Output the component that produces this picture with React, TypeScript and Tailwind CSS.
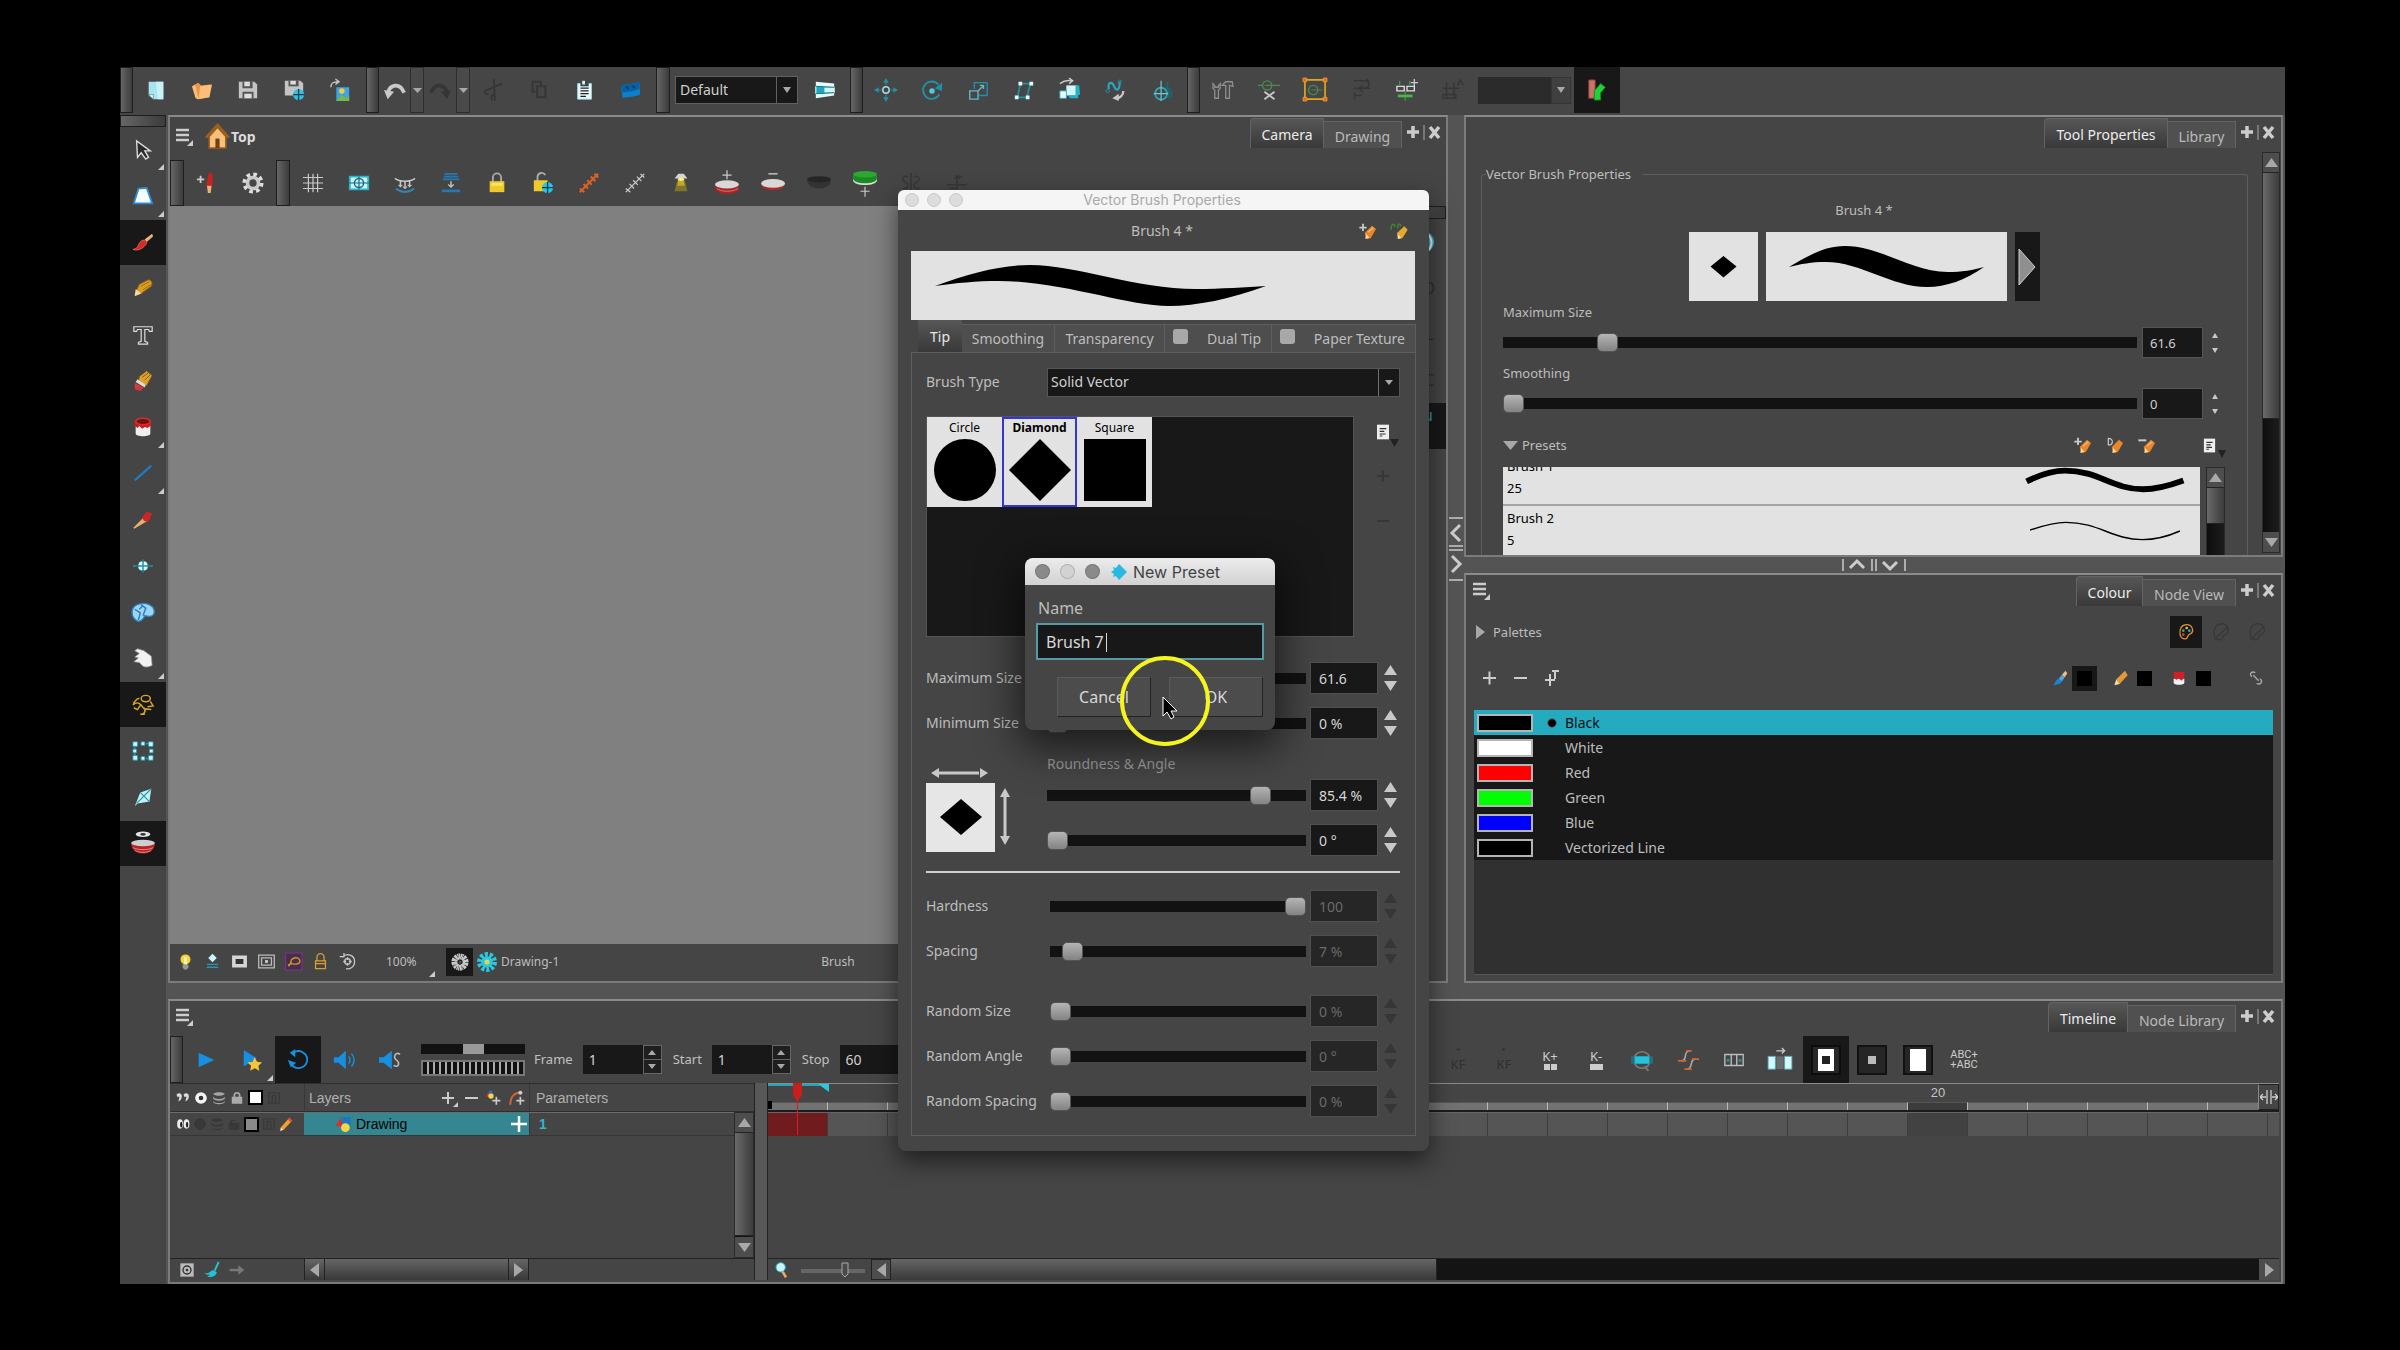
import type { ReactNode } from 'react'

const G = '#c9c9c9'
const TEAL = '#1f93a6'
const DIM = '#363636'

// 24x24 drawings, keyed by tool
const ICONS: Record<string, ReactNode> = {
  newDoc: <><path d="M4 3h16v19H9l-5-4z" fill="#a9e4ee" /><path d="M4 17l5 5v-5z" fill="#e9fbff" stroke="#4a7a84" strokeWidth=".7" /><path d="M12 3h8v19h-6z" fill="#c9f2f8" /></>,
  open: <><path d="M2 7l6-3 3 3 10-1-1 14-13 2z" fill="#e8964a" /><path d="M1 8l4-1 3 15-3-1zM10 8l13-2-3 14-12 2z" fill="#fbbd77" /></>,
  save: <><path d="M2 3h17l3 3v15H2z" fill="#c4c4c4" /><path d="M6 3h11v7H6zM6 14h12v7H6z" fill="#555" /><path d="M8 3h6v5H8zM8 16h8v5H8z" fill="#ddd" /></>,
  saveAs: <><path d="M2 2h17l3 3v13H2z" fill="#c4c4c4" /><path d="M6 2h11v6H6z" fill="#555" /><path d="M8 2h6v4H8z" fill="#ddd" /><circle cx="17" cy="17" r="6" fill="#29c4e0" /><path d="M17 11v12M11 17h12" stroke="#083a52" strokeWidth="1.4" /></>,
  importImg: <><path d="M2 9c0-5 3-6 8-6M7 0l4 3-4 3" fill="none" stroke={G} strokeWidth="1.5" /><path d="M8 9h14v15H8z" fill="#3aa5e8" /><circle cx="14" cy="13" r="3" fill="#f6c944" /><path d="M8 24l6-7 4 4 4-3v6z" fill="#7ab648" /></>,
  undo: <><path d="M4 16C6 6 17 3 22 15" fill="none" stroke={G} strokeWidth="4" /><path d="M0 12l11 2-7 8z" fill={G} /></>,
  redo: <><path d="M2 15C7 3 18 6 20 16" fill="none" stroke={DIM} strokeWidth="4" /><path d="M24 12l-11 2 7 8z" fill={DIM} /></>,
  cut: <path d="M13 0l1 24M3 13l19-8M4 13a2 2 0 103 3M13 17a2 3 0 10-1 6" fill="none" stroke={DIM} strokeWidth="2" />,
  copy: <path d="M8 14H5V3h9v4M10 8h9v12h-9z" fill="none" stroke={DIM} strokeWidth="2.200" />,
  paste: <><path d="M4 5h15v17H4z" fill="#eefafc" stroke="#9adbe6" /><path d="M7 4h9v4H7z" fill="#2c4a50" /><path d="M9 2h3v4H9z" fill="#eee" /><path d="M7 10h9M7 13h9M7 16h9M7 19h6" stroke="#222" strokeWidth="1.400" /></>,
  clapper: <><path d="M1 7c7-2 13-1 20-4l1 14c-6 3-12 2-19 4z" fill="#0b80cc" /><path d="M1 7c7-2 13-1 20-4v8c-6 3-12 2-18 4z" fill="#0a5fa0" /><path d="M7 8l2 3M14 7l2 3" stroke="#063f70" strokeWidth="2" /></>,
  sheet: <><path d="M2 3l20 2v13L2 21z" fill="#e3fbfe" /><path d="M2 8l20 1v6L2 16z" fill="#19a9c0" /><path d="M2 8v8M22 9v6M12 10h9v4h-9z" stroke="#e3fbfe" strokeWidth="1.200" fill="#d0f5fa" /><path d="M2 8l20 1M2 16l20-1" stroke="#176c7c" /></>,
  move: <g stroke={TEAL} fill="none" strokeWidth="1.300"><circle cx="12" cy="12" r="3.500" stroke="#a9d8e0" strokeWidth="1.600" /><path d="M12 7V1M12 23v-6M1 12h6M23 12h-6" /><path d="M9 4l3-5 3 5zM9 20l3 5 3-5zM4 9l-5 3 5 3zM20 9l5 3-5 3z" fill={TEAL} stroke="none" /></g>,
  rotate: <><path d="M19 6a9.500 9.500 0 101 11" fill="none" stroke={TEAL} strokeWidth="2" /><path d="M23 4v9l-8-3z" fill={TEAL} /><circle cx="12" cy="13" r="3" fill="#4cc9e4" /></>,
  scale: <g fill="none" stroke={TEAL} strokeWidth="1.500"><path d="M8 11V4h14v14H13" /><path d="M3 13h9v9H3z" stroke="#63b8c6" /><path d="M12 13l6-6M14 7h4v4" stroke="#63b8c6" /></g>,
  skew: <><path d="M8 5h11l-4 15H5z" fill="none" stroke={TEAL} strokeWidth="1.800" /><path d="M6 3h4v4H6zM18 3h4v4h-4zM2 18h4v4H2zM14 18h4v4h-4z" fill="#e3fbff" /></>,
  maintain: <><path d="M8 7h12v11H8z" fill="#d3f8fc" /><path d="M18 7h4l1 10-5 2zM10 18h11v3h-9z" fill="#23b3c9" /><path d="M1 13h7v8H1z" fill="#f0feff" stroke="#23b3c9" /><path d="M1 5c4-3 8-4 13-3M11-1l4 3-4 3" stroke={G} fill="none" strokeWidth="1.500" /></>,
  spline: <><path d="M4 11C3 2 8 3 10 8s6 6 6-5" fill="none" stroke="#2ba6bb" strokeWidth="2.400" /><path d="M20 13c0 5-4 8-8 8" fill="none" stroke={G} strokeWidth="2.500" /><path d="M8 21l7-5v8z" fill={G} /><circle cx="16" cy="3" r="1.800" fill="none" stroke={TEAL} /><circle cx="3" cy="13" r="1.800" fill="none" stroke={TEAL} /></>,
  pivot: <><circle cx="11" cy="16" r="6.500" fill="none" stroke="#2ba6bb" strokeWidth="2" /><path d="M11 2v22M3 16h17" stroke="#74c6d4" strokeWidth="1.300" /><path d="M18 3v6c5 3 6 8 2 12M16 9c4 3 4 8 2 12" stroke="#176c7a" strokeWidth="1.500" fill="none" /></>,
  rigTools: <g fill="none" stroke="#8f8f8f" strokeWidth="1.400"><path d="M1 5v5l2 2v9h4v-9l2-2V5L7 7v2H3V7zM11 7l4-4h7l1 5-4-1v14h-4V7z" /></g>,
  cutCable: <><circle cx="10" cy="7" r="5" fill="none" stroke="#4c8a4f" strokeWidth="1.500" /><path d="M0 7h5M8 7h16" stroke="#4c8a4f" strokeWidth="1.300" /><path d="M7 14l11 8M18 14L7 22" stroke={G} strokeWidth="2" /></>,
  bounds: <><path d="M1 1h22v21H1z" fill="none" stroke="#e0a91b" strokeWidth="1.800" /><circle cx="10" cy="12" r="5" fill="none" stroke="#4c8a4f" strokeWidth="1.500" /><path d="M8 12h12" stroke="#4c8a4f" /><path d="M-1-1h4v4h-4zM21-1h4v4h-4zM-1 20h4v4h-4zM21 20h4v4h-4z" fill="#e5622a" stroke="#f09a2c" /></>,
  reorder: <path d="M4 2h14c4 2 4 8-4 8H4M18 0l3 3M14 10h8M14 7l-4 3 4 4M5 14v8M5 18h8" fill="none" stroke={DIM} strokeWidth="1.600" />,
  addPeg: <><path d="M1 8h8v5H1zM12 8h8v5h-8z" fill="none" stroke="#ddd" strokeWidth="1.500" /><path d="M20 0v8M16 4h8" stroke={G} strokeWidth="1.500" /><path d="M4 2v6M15 2v6M10 13v4M10 20v4" stroke="#4c8a4f" strokeWidth="1.500" /><path d="M2 17h16v3H2z" fill="#46b94a" /></>,
  addPegOff: <path d="M1 10h18M1 17h14v4H1zM5 4v16M13 4v16M17 7l3-6 3 6" fill="none" stroke={DIM} strokeWidth="1.600" />,
  deform: <><path d="M3 1h7v20H3z" fill="#c87468" stroke="#8d3b33" /><path d="M9 23V13l7-8 5 4-5 6v8z" fill="#22d13a" stroke="#0a8a1d" /></>,
  brushPlus: <><path d="M1 8h8M5 4v8" stroke={G} strokeWidth="2" /><path d="M14 1l4 1v13h-7z" fill="#cc2020" /><path d="M12 15h5l-1 8h-3z" fill="#e9b474" /></>,
  gear: <><circle cx="12" cy="12" r="6" fill="none" stroke={G} strokeWidth="4" /><circle cx="12" cy="12" r="9.500" fill="none" stroke="#ddd" strokeWidth="4" strokeDasharray="4 3.460" /></>,
  grid: <path d="M7 2v20M12 2v20M17 2v20M1 6h22M1 12h22M1 18h22" stroke={G} strokeWidth="1.300" />,
  safe: <><path d="M2 5h20v14H2z" fill="#c9f4fa" stroke="#2bb5c9" strokeWidth="2" /><circle cx="12" cy="12" r="5" fill="none" stroke="#196d82" strokeWidth="1.600" /><path d="M0 12h24M12 5v14" stroke="#196d82" strokeWidth="1.300" /></>,
  outline: <g fill="none" strokeWidth="1.600"><path d="M1 7c5 4 17 4 22 0M7 10v5M12 11v6M17 10v5" stroke={G} /><path d="M5 14l2 2 2-2M10 16l2 2 2-2M15 14l2 2 2-2" stroke={G} strokeWidth="1.200" /><path d="M2 18c6 5 14 5 20 0" stroke="#2d88b8" strokeWidth="2" /></g>,
  flatten: <><path d="M5 1h14v2H5zM4 4h16v2H4zM3 7h18v2H3zM2 19h20v3H2z" fill="#2578b4" /><path d="M12 10v7M9 13.500l3 3 3-3" fill="none" stroke={G} strokeWidth="1.500" /></>,
  lock: <><path d="M7.500 11V6a4.500 4.500 0 019 0v5" fill="none" stroke="#aaa" strokeWidth="2" /><path d="M4 10h16v12H4z" fill="#edc92c" /><path d="M6 12h12v3H6z" fill="#fbe36a" /></>,
  unlock: <><path d="M6 10V5a4.500 4.500 0 018.500-1.500" fill="none" stroke="#aaa" strokeWidth="2" /><path d="M2 9h15v12H2z" fill="#edc92c" /><circle cx="17" cy="17" r="6" fill="#29c4e0" /><path d="M17 11v12M11 17h12" stroke="#083a52" strokeWidth="1.400" /></>,
  orangeTicks: <path d="M2 22L22 2M2 18l5 4M6 13l5 5M10 9l5 5M14 5l5 5M18 2l4 4" stroke="#d8622a" strokeWidth="2.200" />,
  greyTicks: <path d="M2 22L22 2M2 18l5 4M6 13l5 5M10 9l5 5M14 5l5 5M18 2l4 4" stroke={G} strokeWidth="1.400" />,
  lamp: <><path d="M8 9h8l3 12H5z" fill="#80742c" /><path d="M9 9h6l1 6H8z" fill="#c0a828" /><path d="M9 2h6l4 5H5z" fill="#d5d5d5" /><ellipse cx="12" cy="8" rx="3.500" ry="1.800" fill="#fff27a" /></>,
  drumPlus: <><path d="M12-2v10M7 3.500h10" stroke={G} strokeWidth="1.400" /><path d="M-1 14v4c0 8 26 8 26 0v-4z" fill="#a52626" /><path d="M1 18c5 4 17 4 23 0" stroke="#d77" fill="none" /><ellipse cx="12" cy="13.500" rx="13" ry="4.500" fill="#d8d8d8" /></>,
  drumMinus: <><path d="M7 2h10" stroke={G} strokeWidth="1.500" /><path d="M-1 13c0 9 26 9 26 0z" fill="#b02a2a" /><ellipse cx="12" cy="12.500" rx="13" ry="4.800" fill="#d8d8d8" /></>,
  drumOff: <><path d="M-1 9c0 12 26 12 26 0z" fill="#333" /><ellipse cx="12" cy="8" rx="13" ry="3.500" fill="#252525" /></>,
  drumGreen: <><path d="M-1 4v5c0 7 26 7 26 0V4z" fill="#ddd" /><path d="M-1 3v4c0 7 26 7 26 0V3z" fill="#1b8a25" /><ellipse cx="12" cy="2.500" rx="13" ry="3.500" fill="#2aa832" /><path d="M12 16v11M7 21h10" stroke={G} strokeWidth="1.300" /></>,
  mirror: <path d="M12 1v22M9 5c-6-2-8 4-3 6 5 3 2 8-3 7M15 5c6-2 8 4 3 6-5 3-2 8 3 7" fill="none" stroke={DIM} strokeWidth="1.600" />,
  curveOff: <path d="M1 14h22M4 18h8V5h6M9 8l3-4 3 4" fill="none" stroke={DIM} strokeWidth="1.600" />,
  cursor: <path d="M5 2l1 18 4-5 5 7 3-2-4-7h6z" fill="#2a2a2a" stroke="#ddd" strokeWidth="1.500" />,
  cutter: <path d="M7 4l9-1 6 17H2z" fill="#f4fcff" stroke="#2d8bd0" strokeWidth="2" />,
  brush: <><path d="M14 9l8-6 1 3-7 6z" fill="#e8b577" /><path d="M1 20c6 0 5-6 9-9 4-3 8 1 5 4-4 5-9 7-14 5z" fill="#d32a2a" stroke="#ef6b5c" strokeWidth=".8" /></>,
  pencil: <><path d="M8 8l10-5c3 0 5 4 3 7l-11 8-7 1z" fill="#dc9c20" stroke="#8e6413" /><path d="M4 13l6 5-7 3z" fill="#f6d9aa" /><path d="M10 10l9-5M12 14l9-6" stroke="#8e6413" strokeWidth=".9" /></>,
  text: <path d="M2 3h20v5h-3l-1-2h-4v13l3 1v2H7v-2l3-1V6H6L5 8H2z" fill="#454545" stroke="#ddd" strokeWidth="1.300" />,
  eraser: <><path d="M8 7l8-6 6 5-6 11-9-4z" fill="#dca126" stroke="#7d5a15" /><path d="M11 8l7-5M14 11l6-6" stroke="#7d5a15" /><path d="M3 14l10 5-4 4-6-2z" fill="#d23a3a" /><path d="M6 10l9 6-1 3-10-6z" fill="#ddd" /></>,
  paint: <><path d="M4 7v12c0 4 16 4 16 0V7z" fill="#efefef" /><path d="M3 6v5l3 2 2-2 3 3 3-2 3 1 4-3V6z" fill="#c81e1e" /><ellipse cx="12" cy="6" rx="8" ry="3.500" fill="#6e1111" stroke="#d82c2c" strokeWidth="1.800" /></>,
  line: <path d="M3 20L21 4" stroke="#1d7cc4" strokeWidth="2.400" />,
  ink: <><path d="M2 21l12-12 3 3z" fill="#e9b070" stroke="#e9b070" strokeWidth="1.500" /><path d="M11 9l5-6 6 2-4 9-5-1z" fill="#cd2424" /></>,
  centre: <><circle cx="12" cy="12" r="5.500" fill="#d9f8fc" /><path d="M1 12h22M12 5v14" stroke={TEAL} strokeWidth="1.600" /><path d="M4 12l3-2v4zM20 12l-3-2v4zM12 4l2 3h-4zM12 20l2-3h-4z" fill="#1c7586" /></>,
  morph: <><path d="M0 12C0 3 15-1 23 7c3 6 1 12-9 9-2 5-6 7-8 6-4-2-6-5-6-10z" fill="#9fd4f2" stroke="#2a80c0" strokeWidth="1.500" /><path d="M3 9l6 4-2 8M10 4l5 4-3 8M8 9l4-4" fill="none" stroke="#2a80c0" strokeWidth="1.600" /></>,
  hand: <path d="M3 4l5 3-5 4 4 1-5 4 6 1 4 4c4 2 8 0 10-1l-1-10-8-6-7-2z" fill="#f2f2f2" stroke="#999" strokeWidth=".8" />,
  run: <g fill="none" stroke="#d9a526" strokeWidth="1.600"><ellipse cx="15" cy="5" rx="5" ry="3.500" /><path d="M1 12c4-4 7-2 9 0l3 4 8 1M10 11l-4 6-4-2M13 15c3 4 0 7-3 7M8 5C4 4 4 9 1 10M20 8l3 5-6 1M9 22h5" /></g>,
  select: <><path d="M3 4h18v16H3z" fill="none" stroke="#1f93a8" strokeWidth="2" strokeDasharray="4 2" /><path d="M1 2h5v5H1zM10 2h4v4h-4zM18 2h5v5h-5zM1 17h5v5H1zM10 18h4v4h-4zM18 17h5v5h-5zM1 10h4v4H1zM19 10h4v4h-4z" fill="#c8f6fb" stroke="#1f93a8" strokeWidth=".8" /></>,
  kite: <><path d="M9 7l12-4-2 14-13 2-3 3z" fill="#bff3f8" /><path d="M9 7l10 10M21 3L5 19" stroke="#2b98ac" strokeWidth="1.300" /></>,
  onion: <><ellipse cx="12" cy="2.500" rx="8" ry="3" fill="#e3e3e3" /><ellipse cx="12" cy="2.500" rx="3" ry="1.500" fill="#333" /><path d="M-1 13c1 14 25 14 26 0z" fill="#b62525" /><ellipse cx="12" cy="12" rx="13" ry="3.500" fill="#cfcfcf" /><path d="M1 17c5 3 17 3 22 0M3 20c5 3 13 3 18 0" stroke="#ee8a8a" fill="none" /></>,
  home: <><path d="M4 12v11h16V12l-8-9z" fill="#f8c07a" stroke="#9c5f1e" strokeWidth="1.500" /><path d="M1 13L12 1l11 12" fill="none" stroke="#9c5f1e" strokeWidth="2.500" /><path d="M10 14h4v9h-4z" fill="#704012" /></>,
  bulb: <><circle cx="12" cy="9" r="7" fill="#f9d33c" /><path d="M10 6h4v11h-4z" fill="#fff6b5" /><path d="M8 16h8v5l-4 3-4-3z" fill="#999" /></>,
  lightTable: <><path d="M12 1l6 6-6 6-6-6z" fill="#c9f5fc" /><path d="M4 16h16M4 20h16" stroke="#2a95ae" strokeWidth="2" /></>,
  mask: <path d="M4 6h16v12H4z" fill="#333" stroke="#d5d5d5" strokeWidth="5" />,
  maskLine: <><path d="M1 3h22v18H1zM5 7h14v10H5z" fill="none" stroke="#bbb" strokeWidth="1.800" /><path d="M10 10h4v4h-4z" fill="#ccc" /></>,
  lasso: <><path d="M1 0h23v24H1z" fill="#43304a" stroke="#8b2d93" strokeWidth="1.500" /><path d="M4 17l5-2c-4-8 11-12 12-4 0 6-7 5-12 4M5 19l3-5" fill="none" stroke="#d8902f" strokeWidth="2" /></>,
  lockOutline: <path d="M7 11V6a5 5 0 0110 0v5M5 11h14v11H5zM5 15h14" fill="none" stroke="#d9a12c" strokeWidth="1.800" />,
  reset: <g fill="none" stroke={G} strokeWidth="1.800"><path d="M5 6c6-7 17-3 17 6s-8 11-12 10M1 5h6V0" /><circle cx="12" cy="12" r="4" /><path d="M12 6v4M12 14v4M6 12h4M14 12h4" /></g>,
  flower: <><circle cx="12" cy="12" r="7.500" fill="none" stroke={G} strokeWidth="8" strokeDasharray="4.300 .4" /><circle cx="12" cy="12" r="9.500" fill="none" stroke="#181818" strokeWidth="5" strokeDasharray=".8 4.170" /><circle cx="12" cy="12" r="2" fill="#555" /></>,
  flowerTeal: <><circle cx="12" cy="12" r="7" fill="#2cc8e2" /><circle cx="12" cy="12" r="9" fill="none" stroke="#2cc8e2" strokeWidth="6" strokeDasharray="3.600 2.055" /><circle cx="12" cy="12" r="3" fill="#e8d44c" /></>,
  play: <path d="M4 4l17 8-17 8z" fill="#1690e0" />,
  playStar: <><path d="M3 1l14 9-14 9z" fill="#1690e0" /><path d="M15 9l2.500 5 5.500.6-4 3.700 1 5.500-5-2.800-5 2.800 1-5.500-4-3.700 5.500-.6z" fill="#f5c63c" /></>,
  loop: <><path d="M7 4c8-5 16 2 15 9-2 9-13 10-17 4" fill="none" stroke="#1690e0" strokeWidth="2" /><path d="M1 12l3 8 6-5zM9 0L3 4l6 5z" fill="#1690e0" /></>,
  sound: <><path d="M1 9h5l8-7v20l-8-7H1z" fill="#1690e0" /><path d="M17 8c2 2 2 6 0 8M20 5c4 4 4 10 0 14" fill="none" stroke="#1690e0" strokeWidth="1.600" /></>,
  scrub: <><path d="M0 9h5l9-7v20l-9-7H0z" fill="#1690e0" /><path d="M23 6c-5-4-8 3-4 6s3 9-3 6" fill="none" stroke="#bbb" strokeWidth="1.700" /></>,
  prevKey: <path d="M16 0v8L7 4z" fill="#303030" />,
  nextKey: <path d="M8 0v8l9-4z" fill="#303030" />,
  zoomKey: <><circle cx="12" cy="12" r="9" fill="none" stroke="#7b7b7b" strokeWidth="1.800" /><path d="M15 19l4 5" stroke="#7b7b7b" strokeWidth="2" /><path d="M0 8h24v8H0z" fill="#2a6d78" /><path d="M4 8h16v8H4z" fill="#23c4de" /></>,
  ease: <g fill="none" strokeWidth="1.800"><path d="M5 13C12 13 6 2 14 2M11 22c7 0 2-11 9-11" stroke="#a8a8a8" /><path d="M1 13h9M10 2h6M8 22h8M16 11h8" stroke="#d3642e" /></g>,
  cells: <><path d="M2 6h20v12H2zM9 6v12M15 6v12" fill="none" stroke="#bbb" strokeWidth="1.500" /><path d="M4 11h3v3H4zM17 11h3v3h-3z" fill={TEAL} /></>,
  spread: <><path d="M-1 8h8v14h-8zM17 8h8v14h-8z" fill="#d6f7fc" stroke="#4aa9b8" /><path d="M8 8h8v14H8z" fill="#6b6b6b" /><path d="M8 2h9M14-1l3 3-3 3" fill="none" stroke={G} strokeWidth="1.500" /></>,
  palette: <><path d="M13 1C5 1 2 8 3 15c1 8 9 9 11 5 1-3 1-4 4-5 7-3 4-14-5-14z" fill="none" stroke="#d98b35" strokeWidth="2" /><circle cx="13" cy="6" r="2" fill="#e7c42c" /><circle cx="8" cy="10" r="2" fill="#3db24a" /><circle cx="8" cy="16" r="2" fill="#d6402e" /><circle cx="17" cy="10" r="2" fill="#2b9bd4" /></>,
  paletteOff: <path d="M13 1C5 1 2 8 3 15c1 8 9 9 11 5 1-3 1-4 4-5 7-3 4-14-5-14zM3 22L21 5" fill="none" stroke="#393939" strokeWidth="2" />,
  brushBlue: <><path d="M1 22c5 0 3-8 9-9l5 4c-3 5-8 6-14 5z" fill="#1c82d0" /><path d="M10 13l5-6 4 4-4 6z" fill="#4aa7e6" /><path d="M15 7l5-6 3 4-4 6z" fill="#f0bd84" /></>,
  pencilOr: <><path d="M5 14L18 1l4 7-12 13z" fill="#e39a35" /><path d="M5 14l5 7-8 2z" fill="#f7dcb2" /></>,
  paintRed: <><path d="M4 13h16v6c0 4-16 4-16 0z" fill="#f3f3f3" /><path d="M4 3h16v8l-4 5-5-4-3 3-4-4z" fill="#d21f26" /></>,
  link: <path d="M11 4C5 1 1 7 6 10M13 20c6 3 10-3 5-7M8 8l8 8" fill="none" stroke="#aaa" strokeWidth="2" />,
  pencilAdd: <><path d="M-1 7h11M4.500 1v11" stroke={G} strokeWidth="2.800" /><path d="M7 15l11-11 6 5-8 14-6 1z" fill="#e8862a" /><path d="M9 16l5 6-6 2z" fill="#f9d9a8" /><path d="M12 14l8-7" stroke="#f8b468" strokeWidth="2" /></>,
  pencilRemove: <><path d="M-1 5h12" stroke={G} strokeWidth="3" /><path d="M7 15l11-11 6 5-8 14-6 1z" fill="#e8862a" /><path d="M9 16l5 6-6 2z" fill="#f9d9a8" /><path d="M12 14l8-7" stroke="#f8b468" strokeWidth="2" /></>,
  pencilDup: <><path d="M2 2v10c8 0 8-10 0-10z" fill="none" stroke={G} strokeWidth="1.800" /><path d="M7 15l11-11 6 5-8 14-6 1z" fill="#e8862a" /><path d="M9 16l5 6-6 2z" fill="#f9d9a8" /></>,
  pencilNew: <><path d="M0 10C0 0 5 0 6 6M10 8c0-8 3-8 5-3" fill="none" stroke="#3b8c30" strokeWidth="2.200" /><path d="M9 15l11-10 5 5-8 13-6 1z" fill="#e8a82e" /><path d="M10 16l5 6-5 2z" fill="#f9e0b0" /></>,
  page: <><path d="M3 1h18v22H3z" fill="#eee" /><path d="M7 7h10M7 11h7M7 15h9M7 18h4" stroke="#333" strokeWidth="1.800" /></>,
  eyes: <><ellipse cx="7" cy="12" rx="5" ry="8" fill="#eee" /><ellipse cx="18" cy="12" rx="5" ry="8" fill="#eee" /><ellipse cx="9" cy="13" rx="2" ry="5" fill="#222" /><ellipse cx="19" cy="13" rx="2" ry="5" fill="#222" /></>,
  eyesSide: <path d="M1 6c4-4 9-2 9 3s-3 8-6 9l2-8H2zM13 6c4-4 9-2 9 3s-3 8-6 9l2-8h-4z" fill="#ddd" />,
  solo: <><circle cx="12" cy="12" r="10" fill="#f5f5f5" /><circle cx="12" cy="12" r="4" fill="#333" /></>,
  soloOff: <circle cx="12" cy="12" r="10" fill="#383838" />,
  stack: <path d="M2 5c3-4 17-4 20 0-3 4-17 4-20 0zM2 10c3 5 17 5 20 0v3c-3 5-17 5-20 0zM2 17c3 5 17 5 20 0v2c-3 5-17 5-20 0z" fill="#a5a5a5" />,
  stackOff: <path d="M2 5c3-4 17-4 20 0-3 4-17 4-20 0zM2 10c3 5 17 5 20 0v3c-3 5-17 5-20 0zM2 17c3 5 17 5 20 0v2c-3 5-17 5-20 0z" fill="#383838" />,
  lockGrey: <path d="M3 10h3V7c0-7 12-7 12 0v3h3v12H3zM9 10h6V7c0-3-6-3-6 0z" fill="#aaa" />,
  lockOff: <path d="M3 10h3V5h9v2H9v3h12v12H3z" fill="#383838" />,
  onionOff: <path d="M3 3h18v18H3zM9 20V8h6v12" fill="none" stroke="#383838" strokeWidth="2" />,
  pencilRow: <><path d="M3 18L17 2l5 5L8 22z" fill="#f0a22c" /><path d="M3 18l5 4-6 2z" fill="#ffe8bf" /><path d="M15 4l5 5 3-3-5-5z" fill="#e04a3a" /></>,
  drawingLayer: <><path d="M10 0h13v13H10z" fill="#1a76c4" /><path d="M-1 14L8 1l3 15z" fill="#d22f2f" /><circle cx="15" cy="17" r="7" fill="#f4d647" /></>,
  addDrawing: <><path d="M1 10l4-7 4 7z" fill="#d22f2f" /><circle cx="9" cy="9" r="4" fill="#f4d647" /><path d="M6 1h5v4H6z" fill="#1a76c4" /><path d="M17 10v12M11 16h12" stroke={G} strokeWidth="2.500" /></>,
  addPegLayer: <><path d="M2 22C2 10 8 3 20 4" fill="none" stroke="#d3642e" strokeWidth="3" /><circle cx="17" cy="4" r="3" fill="#ccc" /><path d="M17 10v12M11 16h12" stroke={G} strokeWidth="2.500" /></>,
  thumb: <><path d="M2 2h20v20H2z" fill="#bbb" /><circle cx="12" cy="12" r="6" fill="none" stroke="#333" strokeWidth="2" /><circle cx="12" cy="12" r="2" fill="#333" /></>,
  feather: <><path d="M22 0l-6 13" stroke="#25c0d6" strokeWidth="3" /><path d="M0 16c7 3 9-2 13-4l6 3c0 6-8 9-14 7l4-3c-4 1-7-1-9-3z" fill="#25c0d6" /></>,
  arrowOff: <path d="M1 10h13V5l9 7-9 7v-5H1z" fill="#777" />,
  magnify: <><path d="M12 13l6 10" stroke="#eda95a" strokeWidth="4" /><circle cx="10" cy="8" r="7" fill="#c8f6fd" stroke="#2cb0c9" strokeWidth="1.500" /></>,
  ball: <><circle cx="12" cy="12" r="11" fill="#35b6d0" /><path d="M8 3c8 3 8 14 2 18M12 1c12 6 10 17 2 22" stroke="#e2fbff" fill="none" strokeWidth="2" /></>,
}

function Icon({ name, className = 'size-6' }: { name: string; className?: string }) {
  return <svg viewBox="0 0 24 24" className={`shrink-0 overflow-visible ${className}`} aria-hidden="true">{ICONS[name]}</svg>
}

function Tool({ name, active, corner, className = 'w-[46px]' }: { name: string; active?: boolean; corner?: boolean; className?: string }) {
  return (
    <button aria-label={name} className={`relative flex h-full shrink-0 items-center justify-center ${active ? 'bg-[#181818]' : ''} ${className}`}>
      <Icon name={name} className="size-[22px]" />
      {corner && <Corner />}
    </button>
  )
}

function Corner() {
  return <svg viewBox="0 0 6 6" className="absolute right-[2px] bottom-[2px] size-[6px]"><path d="M6 0v6H0z" fill="#ccc" /></svg>
}

function Grip({ className = 'w-[13px]' }: { className?: string }) {
  return <div className={`shrink-0 border border-[#1e1e1e] bg-linear-to-r from-[#666] to-[#3c3c3c] ${className}`} />
}

function Tri({ dir, className = 'size-3', fill = '#a8a8a8' }: { dir: 'up' | 'down' | 'left' | 'right'; className?: string; fill?: string }) {
  const d = { up: 'M0 10L5 0l5 10z', down: 'M0 0h10L5 10z', left: 'M10 0v10L0 5z', right: 'M0 0l10 5-10 5z' }[dir]
  return <svg viewBox="0 0 10 10" preserveAspectRatio="none" className={`shrink-0 ${className}`}><path d={d} fill={fill} /></svg>
}

function Drop({ className = 'w-[14px]' }: { className?: string }) {
  return (
    <button aria-label="History" className={`flex h-full items-center justify-center border border-[#2e2e2e] bg-[#4a4a4a] ${className}`}>
      <Tri dir="down" className="h-[5px] w-[9px]" />
    </button>
  )
}

function Burger() {
  return (
    <button aria-label="View menu" className="relative h-[18px] w-[17px]">
      <svg viewBox="0 0 17 18" className="size-full"><path d="M0 2h13M0 7h13M0 12h13" stroke="#ccc" strokeWidth="2.500" /><path d="M17 12v6h-6z" fill="#ccc" /></svg>
    </button>
  )
}

function ViewTabs({ tabs }: { tabs: [string, string][] }) {
  return (
    <div className="flex h-[31px] items-end self-start text-sm" role="tablist">
      {tabs.map(([t, w], i) => (
        <button
          key={t}
          role="tab"
          aria-selected={i === 0}
          className={`whitespace-nowrap border border-b-0 border-[#636363] pt-[3px] ${w} ${i === 0 ? 'h-[30px] rounded-tl-sm bg-linear-to-b from-[#575757] to-[#393939] text-[#ececec]' : 'h-[27px] border-l-0 bg-[#505050] text-[#bababa]'}`}
        >
          {t}
        </button>
      ))}
      <svg viewBox="0 0 36 18" className="mb-[6px] ml-[4px] h-[18px] w-[36px]" aria-label="Add or close view">
        <path d="M1 8h12M7 2v12M24 3l9 11M33 3l-9 11" stroke="#ccc" strokeWidth="3.500" />
        <path d="M18 1v15" stroke="#aaa" />
      </svg>
    </div>
  )
}

const PANEL = 'border-2 border-[#7b7b7b] border-t-[#8b8b8b] bg-[#454545]'

function Slider({ label, value, disabled, className = '' }: { label: string; value: number; disabled?: boolean; className?: string }) {
  return (
    <input
      type="range"
      aria-label={label}
      defaultValue={value}
      step="any"
      disabled={disabled}
      className={`m-0 h-5 min-w-0 appearance-none bg-transparent [&::-webkit-slider-runnable-track]:h-[11px] [&::-webkit-slider-runnable-track]:bg-[#121212] [&::-webkit-slider-thumb]:-mt-1 [&::-webkit-slider-thumb]:h-[19px] [&::-webkit-slider-thumb]:w-[21px] [&::-webkit-slider-thumb]:appearance-none [&::-webkit-slider-thumb]:rounded-[5px] [&::-webkit-slider-thumb]:border [&::-webkit-slider-thumb]:border-[#555] [&::-webkit-slider-thumb]:bg-linear-to-b [&::-webkit-slider-thumb]:from-[#b5b5b5] [&::-webkit-slider-thumb]:to-[#838383] ${className}`}
    />
  )
}

function Stroke({ d, className }: { d: string; className: string }) {
  return <svg viewBox={className.includes('504') ? '0 0 504 69' : '0 0 241 69'} className={`shrink-0 bg-[#e2e2e2] ${className}`}><path d={d} /></svg>
}

/* ---------- top toolbar ---------- */

function MainToolbar() {
  return (
    <header className="flex h-12 items-stretch overflow-hidden bg-[#464646] pb-[2px]">
      <Grip />
      {['newDoc', 'open', 'save', 'saveAs', 'importImg'].map(n => <Tool key={n} name={n} />)}
      <Grip className="ml-[3px] w-[13px]" />
      <Tool name="undo" className="w-[31px]" />
      <Drop />
      <Tool name="redo" className="w-[32px]" />
      <Drop />
      {['cut', 'copy', 'paste', 'clapper'].map(n => <Tool key={n} name={n} />)}
      <Grip className="ml-[2px] w-[14px]" />
      <div className="ml-[5px] flex h-[28px] w-[123px] self-center border border-[#606060]">
        <select aria-label="Workspace" className="min-w-0 flex-1 appearance-none bg-[#181818] pl-1 text-sm text-[#d0d0d0]">
          <option>Default</option>
        </select>
        <span className="flex w-[21px] items-center justify-center border-l border-[#606060] bg-[#181818]"><Tri dir="down" className="h-[6px] w-[8px]" /></span>
      </div>
      <Tool name="sheet" className="ml-[4px] w-[46px]" />
      <Grip className="ml-[2px] w-[13px]" />
      {['move', 'rotate', 'scale', 'skew', 'maintain', 'spline', 'pivot'].map(n => <Tool key={n} name={n} />)}
      <Grip className="ml-[2px] w-[13px]" />
      {['rigTools', 'cutCable', 'bounds', 'reorder', 'addPeg', 'addPegOff'].map(n => <Tool key={n} name={n} />)}
      <div className="ml-[2px] flex h-[27px] w-[93px] self-center">
        <select aria-label="Rig" className="min-w-0 flex-1 appearance-none bg-[#2b2b2b]"><option></option></select>
        <span className="flex w-[20px] items-center justify-center border border-[#353535] bg-[#404040]"><Tri dir="down" className="h-[6px] w-[8px]" /></span>
      </div>
      <Tool name="deform" active className="ml-[3px] w-[46px]" />
    </header>
  )
}

const SIDE: [string, string?][] = [
  ['cursor', 'c'], ['cutter', 'c'], ['brush', 'a'], ['pencil'], ['text'], ['eraser'], ['paint', 'c'], ['line', 'c'],
  ['ink'], ['centre'], ['morph'], ['hand', 'c'], ['run', 'a'], ['select'], ['kite'], ['onion', 'a'],
]

function SideTools() {
  return (
    <nav className="w-[46px] shrink-0 bg-[#454545]">
      <Grip className="h-[12px] w-full bg-linear-to-b" />
      <div className="flex h-[741px] flex-col pb-px">
        {SIDE.map(([n, f]) => (
          <div key={n} className="min-h-0 flex-1 pb-px"><Tool name={n} active={f === 'a'} corner={f === 'c'} /></div>
        ))}
      </div>
    </nav>
  )
}

/* ---------- camera ---------- */

function CameraPanel() {
  return (
    <section className={`flex min-w-0 flex-1 flex-col ${PANEL}`}>
      <div className="flex h-[43px] shrink-0 justify-between pr-[4px] pl-[6px]">
        <div className="flex items-center gap-[12px] pb-1">
          <Burger />
          <div className="flex items-center text-sm font-bold text-[#dcdcdc]"><Icon name="home" className="mr-px size-[25px]" />Top</div>
        </div>
        <ViewTabs tabs={[['Camera', 'w-[74px]'], ['Drawing', 'w-[78px]']]} />
      </div>
      <div className="flex h-[46px] shrink-0 items-stretch">
        <Grip className="w-[14px]" />
        <Tool name="brushPlus" />
        <Tool name="gear" />
        <Grip className="w-[14px]" />
        {['grid', 'safe', 'outline', 'flatten', 'lock', 'unlock', 'orangeTicks', 'greyTicks', 'lamp', 'drumPlus', 'drumMinus', 'drumOff', 'drumGreen', 'mirror', 'curveOff'].map(n => <Tool key={n} name={n} />)}
      </div>
      <div className="flex min-h-0 flex-1">
        <div className="flex-1 bg-[#808080]" />
        <div className="w-[46px] text-center text-base text-[#2e2e2e]">
          <Grip className="h-[13px] w-full bg-linear-to-b" />
          <div className="flex h-[46px] items-center justify-center"><Icon name="ball" /></div>
          {['OD', 'OL', 'OC'].map(t => <div key={t} className="h-[46px] leading-[46px]">{t}</div>)}
          <div className="h-[46px] bg-[#181818] leading-[24px] text-[#2aa0b8]">Cu</div>
        </div>
      </div>
      <div className="flex h-[37px] shrink-0 items-center pb-[2px] text-xs text-[#bdbdbd]">
        {['bulb', 'lightTable', 'mask', 'maskLine', 'lasso', 'lockOutline', 'reset'].map(n => (
          <button key={n} aria-label={n} className="flex w-[27px] justify-center pl-[3px]"><Icon name={n} className="size-[17px]" /></button>
        ))}
        <button className="relative ml-[27px] h-full w-[51px] text-left">100%<Corner /></button>
        <button aria-label="Render" className="ml-[9px] flex h-[28px] w-[27px] items-center justify-center bg-[#181818]"><Icon name="flower" className="size-[18px]" /></button>
        <button className="relative flex items-center gap-1"><Icon name="flowerTeal" className="ml-1 size-5" />Drawing-1</button>
        <span className="ml-[262px]">Brush</span>
      </div>
    </section>
  )
}

/* ---------- tool properties ---------- */

function Spin({ small, dim }: { small?: boolean; dim?: boolean }) {
  const c = small ? 'h-[5px] w-[6px]' : 'h-[10px] w-[13px]'
  const fill = dim ? '#363636' : '#c8c8c8'
  return (
    <span className={`flex flex-col items-center ${small ? 'gap-[10px]' : 'gap-[6px]'}`}>
      <Tri dir="up" className={c} fill={fill} />
      <Tri dir="down" className={c} fill={fill} />
    </span>
  )
}

function VScroll({ thumb, className }: { thumb: string; className: string }) {
  return (
    <div className={`flex shrink-0 flex-col border border-[#2a2a2a] bg-linear-to-r from-[#0e0e0e] to-[#1c1c1c] ${className}`}>
      <span className="flex h-5 shrink-0 items-center justify-center border-b border-[#222] bg-[#4d4d4d]"><Tri dir="up" className="h-[9px] w-[13px]" /></span>
      <span className={`border-b border-[#222] bg-linear-to-r from-[#6a6a6a] to-[#3c3c3c] ${thumb}`} />
      <span className="mt-auto flex h-5 shrink-0 items-center justify-center bg-[#4d4d4d]"><Tri dir="down" className="h-[9px] w-[13px]" /></span>
    </div>
  )
}

const WAVE = 'M23 35C45 22 60 14 79 14C115 14 145 40 182 40C195 40 208 38 218 35C200 48 180 55 161 55C125 55 95 30 60 30C45 30 35 32 23 35Z'
const LONG_WAVE = 'M24 35C60 22 90 14 119 14C165 14 225 38 285 38C310 38 335 36 355 35C320 48 285 55 258 55C215 55 150 30 88 30C65 30 45 32 24 35Z'

function ToolProperties() {
  return (
    <section className={`flex h-[442px] flex-col overflow-hidden ${PANEL}`}>
      <div className="flex h-[35px] shrink-0 justify-end pr-[5px]"><ViewTabs tabs={[['Tool Properties', 'w-[124px]'], ['Library', 'w-[68px]']]} /></div>
      <div className="flex min-h-0 flex-1">
        <fieldset className="mt-[12px] mr-[14px] ml-[15px] min-w-0 flex-1 rounded-t-sm border border-b-0 border-[#5e5e5e] pr-[22px] pl-[21px] text-[13px] leading-5 text-[#bdbdbd]">
          <legend className="-ml-[17px] pr-[11px]">Vector Brush Properties</legend>
          <p className="mt-[16px] text-center">Brush 4 *</p>
          <div className="mt-[12px] flex justify-center gap-2">
            <svg viewBox="0 0 69 69" className="size-[69px] bg-[#e2e2e2]"><path d="M34.500 24l13 10.500-13 11-13-11z" /></svg>
            <Stroke d={WAVE} className="h-[69px] w-[241px]" />
            <button aria-label="Brush properties" className="flex w-[25px] items-center justify-center bg-[#181818]"><svg viewBox="0 0 18 38" className="h-[38px] w-[18px]"><path d="M1 1l16 18L1 37z" fill="#8f8f8f" stroke="#ccc" /></svg></button>
          </div>
          {[['Maximum Size', 15.4, '61.6'], ['Smoothing', 0, '0']].map(([l, v, t]) => (
            <div key={l} className="pt-px pr-[7px]">
              <label htmlFor={`tp-${l}`}>{l}</label>
              <div className="mt-[5px] mb-[4px] flex items-center">
                <Slider label={String(l)} value={Number(v)} className="flex-1" />
                <input id={`tp-${l}`} defaultValue={t} className="mr-[9px] ml-[5px] h-[31px] w-[61px] border border-[#555] bg-[#181818] pl-[7px] text-[#d0d0d0]" />
                <Spin small />
              </div>
            </div>
          ))}
          <div className="mt-[14px] flex h-[24px] items-center">
            <Tri dir="down" className="h-[9px] w-[15px]" />
            <span className="ml-[4px]">Presets</span>
            <span className="mr-[7px] ml-auto flex gap-[16px]">
              <Icon name="pencilAdd" className="size-4" /><Icon name="pencilDup" className="size-4" /><Icon name="pencilRemove" className="size-4" />
            </span>
            <span className="relative mr-[8px] ml-[40px]">
              <Icon name="page" className="size-[15px]" />
              <Tri dir="down" className="absolute -right-[9px] -bottom-[5px] h-[8px] w-[8px]" fill="#222" />
            </span>
          </div>
          <div className="mt-[10px] flex h-[90px] overflow-hidden">
            <ul className="mr-[6px] flex-1 overflow-hidden bg-[#e2e2e2] leading-[22px] text-black">
              <li className="-mt-[12px] flex h-[51px] justify-between border-b-2 border-[#a5a5a5] pr-[14px] pl-1">
                <span>Brush 1<br />25</span>
                <svg viewBox="0 0 162 50" className="w-[162px]"><path d="M1 27C15 20 28 16 40 16C75 16 88 35 120 35C136 35 150 30 161 26" fill="none" stroke="#000" strokeWidth="6" /></svg>
              </li>
              <li className="flex h-[51px] justify-between border-b-2 border-[#a5a5a5] pt-px pr-[14px] pl-1">
                <span>Brush 2<br />5</span>
                <svg viewBox="0 0 162 50" className="w-[162px]"><path d="M3 24C15 20 28 16 40 16C75 16 88 34 120 34C136 34 150 29 159 25" fill="none" stroke="#000" strokeWidth="1.500" /></svg>
              </li>
            </ul>
            <div className="h-[110px] shrink-0"><VScroll thumb="h-[36px]" className="h-full w-[19px]" /></div>
          </div>
        </fieldset>
        <VScroll thumb="h-[246px]" className="mr-px mb-[2px] w-[18px]" />
      </div>
    </section>
  )
}

/* ---------- colour ---------- */

const COLOURS: [string, string][] = [
  ['Black', 'bg-black'], ['White', 'bg-white'], ['Red', 'bg-[#ff0000]'], ['Green', 'bg-[#00ff00]'], ['Blue', 'bg-[#0000ff]'], ['Vectorized Line', 'bg-black'],
]

function ColourPanel() {
  return (
    <section className={`flex min-h-0 flex-1 flex-col px-[8px] pb-[6px] text-sm text-[#bdbdbd] ${PANEL}`}>
      <div className="-mr-[3px] flex h-[31px] justify-between">
        <div className="-ml-px pt-[7px]"><Burger /></div>
        <ViewTabs tabs={[['Colour', 'w-[67px]'], ['Node View', 'w-[93px]']]} />
      </div>
      <div className="mt-[10px] flex h-8 items-center">
        <Tri dir="right" className="ml-[2px] h-[14px] w-[9px]" />
        <span className="ml-[8px] text-[13px]">Palettes</span>
        <button aria-label="Palette list" className="ml-auto flex size-8 items-center justify-center bg-[#181818]"><Icon name="palette" className="size-4" /></button>
        <Icon name="paletteOff" className="ml-[10px] size-[18px]" />
        <Icon name="paletteOff" className="mr-[7px] ml-[18px] size-[18px]" />
      </div>
      <div className="mt-[17px] flex h-[26px] items-center">
        <svg viewBox="0 0 80 16" className="ml-[8px] h-4 w-20" aria-label="Add, remove, add texture"><path d="M1 8h13M7.500 1.500v13M32 8h13M63 10h10M68 4v12M70 1h7M73 1v8" stroke="#ccc" strokeWidth="2" /></svg>
        <Icon name="brushBlue" className="ml-auto size-4" />
        <span className="ml-[4px] size-[25px] border-5 border-[#181818] bg-black" />
        <Icon name="pencilOr" className="ml-[16px] size-4" />
        <span className="ml-[8px] size-[15px] bg-black" />
        <Icon name="paintRed" className="ml-[19px] size-4" />
        <span className="ml-[9px] size-[15px] bg-black" />
        <Icon name="link" className="mr-[9px] ml-[37px] size-4" />
      </div>
      <ul className="mt-[19px] flex-1 border-b border-[#555] bg-[#303030]">
        {COLOURS.map(([n, c], i) => (
          <li key={n} className={`flex h-[25px] items-center pl-[3px] ${i === 0 ? 'bg-[#24abc0] text-[#111]' : 'bg-[#181818]'}`}>
            <span className={`h-[18px] w-[56px] border-2 border-[#b5b5b5] ${c}`} />
            <span className={`mr-[9px] ml-[15px] size-2 rounded-full ${i === 0 ? 'bg-black outline outline-[#4b6f78]' : ''}`} />
            {n}
          </li>
        ))}
      </ul>
    </section>
  )
}

/* ---------- timeline ---------- */

function NumField({ label, value }: { label: string; value: string }) {
  return (
    <label className="mr-[11px] flex items-center text-[13px] text-[#c0c0c0]">
      {label}
      <input defaultValue={value} className="ml-[10px] h-[29px] w-[60px] bg-[#181818] pl-[6px] text-sm text-[#d0d0d0]" />
      <span className="flex h-[29px] w-[19px] flex-col border border-[#666] bg-[#1f1f1f]">
        <span className="flex flex-1 items-center justify-center border-b border-[#666]"><Tri dir="up" className="h-[5px] w-[8px]" /></span>
        <span className="flex flex-1 items-center justify-center"><Tri dir="down" className="h-[5px] w-[8px]" /></span>
      </span>
    </label>
  )
}

function PlaybackBar() {
  return (
    <div className="flex h-[47px] shrink-0 items-center overflow-hidden">
      <Grip className="h-full w-[13px]" />
      <Tool name="play" />
      <Tool name="playStar" corner />
      <Tool name="loop" active />
      <Tool name="sound" />
      <Tool name="scrub" />
      <div className="mr-[9px] ml-[8px] w-[104px]">
        <div className="flex h-[10px] justify-center bg-[#121212]"><span className="w-[21px] bg-[#999]" /></div>
        <div className="mt-[6px] h-[16px] border-2 border-[#777] bg-[repeating-linear-gradient(90deg,#111_0_4px,#aaa_4px_6px)]" />
      </div>
      <NumField label="Frame" value="1" />
      <NumField label="Start" value="1" />
      <NumField label="Stop" value="60" />
      <div className="mr-[294px] ml-auto flex h-full items-center text-center">
        {['prevKey', 'nextKey'].map(n => (
          <button key={n} className="flex w-[46px] flex-col items-center text-[13px] leading-[15px] text-[#303030]"><Icon name={n} className="h-[9px] w-6" />KF</button>
        ))}
        {[['K+', 'flex w-[13px] gap-px'], ['K-', 'flex w-[13px]']].map(([a, c]) => (
          <button key={a} className="flex w-[46px] flex-col items-center text-[13px] leading-[15px] text-[#ccc]">
            {a}
            <span className={c}><i className="h-[6px] flex-1 bg-[#ccc]" />{a === 'K+' && <i className="h-[6px] flex-1 bg-[#ccc]" />}</span>
          </button>
        ))}
        {['zoomKey', 'ease', 'cells', 'spread'].map(n => <Tool key={n} name={n} />)}
        <button aria-label="Thumbnail medium" className="flex h-full w-[46px] items-center justify-center bg-[#181818]"><span className="flex size-[30px] items-center justify-center border-2 border-[#0c0c0c] bg-[#262626]"><i className="h-[22px] w-[16px] border-x-4 border-y-[7px] border-white bg-[#222]" /></span></button>
        <button aria-label="Thumbnail small" className="mx-[8px] flex size-[30px] items-center justify-center border-2 border-[#111] bg-[#262626]"><span className="size-[8px] bg-[#bbb]" /></button>
        <button aria-label="Thumbnail large" className="mx-[8px] flex size-[30px] items-center justify-center border-2 border-[#111] bg-[#262626]"><span className="h-[22px] w-[16px] bg-white" /></button>
        <button className="w-[46px] font-[Roboto,sans-serif] text-[11px] leading-[10px] text-[#ccc]">ABC+<br />+ABC</button>
      </div>
    </div>
  )
}

const COLS = 'grid grid-cols-[134px_225px_1fr]'

function LayerList() {
  return (
    <div className="flex w-[584px] shrink-0 flex-col font-[Liberation_Sans,sans-serif] text-sm text-[#b0b0b0]">
      <div className={`h-[29px] border-t border-b border-[#2e2e2e] ${COLS}`}>
        <div className="flex items-center gap-[4px] pl-[6px]">
          {['eyesSide', 'solo', 'stack', 'lockGrey'].map(n => <Icon key={n} name={n} className="size-[14px]" />)}
          <span className="size-[15px] border-2 border-black bg-white" />
          <Icon name="onionOff" className="size-[14px]" />
        </div>
        <div className="flex items-center border-l border-[#383838] pl-[4px]">
          Layers
          <svg viewBox="0 0 40 18" className="ml-auto h-[18px] w-[40px]"><path d="M1 9h12M7 3v12M24 9h13" stroke="#ccc" strokeWidth="2" /><path d="M17 13v5h-5z" fill="#ccc" /></svg>
          <Icon name="addDrawing" className="mr-[8px] ml-[4px] size-4" />
          <Icon name="addPegLayer" className="mr-[4px] size-4" />
        </div>
        <div className="flex items-center border-l border-[#383838] pl-[6px]">Parameters</div>
      </div>
      <div className="flex min-h-0 flex-1">
        <div className="flex-1">
          <div className={`h-[24px] border-t border-b border-t-[#6b6b6b] border-b-[#363636] ${COLS}`}>
            <div className="flex items-center gap-[3px] pl-[6px]">
              {['eyes', 'soloOff', 'stackOff', 'lockOff'].map(n => <Icon key={n} name={n} className="size-[14px]" />)}
              <span className="size-[15px] border-2 border-black bg-[#8a8a8a]" />
              <Icon name="onionOff" className="size-[14px]" />
              <Icon name="pencilRow" className="size-[14px]" />
            </div>
            <div className="flex items-center bg-[#348791] pl-[32px] text-black">
              <Icon name="drawingLayer" className="mr-[5px] size-[15px]" />Drawing
              <svg viewBox="0 0 16 16" className="mr-[2px] ml-auto size-4"><path d="M0 8h16M8 0v16" stroke="#fff" strokeWidth="2.500" /></svg>
            </div>
            <div className="flex items-center border-l border-[#383838] pl-[9px] font-bold text-[#2bb8cc]">1</div>
          </div>
        </div>
        <VScroll thumb="h-[103px]" className="w-5" />
      </div>
      <div className={`h-[22px] border-t border-[#222] ${COLS}`}>
        <div className="flex items-center gap-[9px] pl-[9px]"><Icon name="thumb" className="size-4" /><Icon name="feather" className="size-4" /><Icon name="arrowOff" className="size-4" /></div>
        <div className="flex border-x border-[#222] bg-linear-to-b from-[#666] to-[#393939]">
          <span className="flex w-5 items-center justify-center border-r border-[#222]"><Tri dir="left" className="h-[14px] w-[9px]" /></span>
          <span className="flex-1" />
          <span className="flex w-5 items-center justify-center border-l border-[#222]"><Tri dir="right" className="h-[14px] w-[9px]" /></span>
        </div>
      </div>
    </div>
  )
}

function Frames() {
  const frames = Array.from({ length: 26 }, (_, i) => i + 1)
  return (
    <div className="relative flex min-w-0 flex-1 flex-col overflow-hidden">
      <div className="flex h-[29px] border-t border-b-2 border-t-[#8a8a8a] border-b-[#1c1c1c]">
        <div className="flex min-w-0 flex-1 overflow-hidden">
          {frames.map(f => (
            <div key={f} className="flex w-[60px] shrink-0 flex-col text-center font-[Liberation_Sans,sans-serif] text-[13px] leading-[18px] text-[#c4c4c4]">
              <span className="h-[18px]">{f === 20 && '20'}</span>
              <span className={`h-[8px] border-t border-r border-t-[#555] border-r-[#bbb] ${f === 20 ? 'bg-[#3c3c3c]' : 'bg-[#727272]'}`} />
            </div>
          ))}
        </div>
        <span className="flex w-[21px] items-center justify-center border border-[#222] border-l-[#888]">
          <svg viewBox="0 0 18 16" className="h-4 w-[18px]"><path d="M7 1v14M11 1v14M0 8h6M18 8h-6M3 5L0 8l3 3M15 5l3 3-3 3" fill="none" stroke="#ccc" strokeWidth="1.300" /></svg>
        </span>
      </div>
      <div className="flex h-[24px] border-t border-[#666]">
        {frames.map(f => (
          <div key={f} className={`w-[60px] shrink-0 border-r border-[#3d3d3d] ${f === 1 ? 'bg-[#701c1e]' : f === 20 ? 'bg-[#424242]' : 'bg-[#555]'}`} />
        ))}
      </div>
      <div className="mt-auto flex h-[22px] border-t border-[#222]">
        <div className="flex w-[103px] items-center pl-[6px]">
          <Icon name="magnify" className="size-4" />
          <svg viewBox="0 0 66 18" className="ml-[10px] h-[18px] w-[66px]"><path d="M1 9h64M1 11h64" stroke="#888" /><path d="M42 2h6v11l-3 3-3-3z" fill="#4a4a4a" stroke="#aaa" /></svg>
        </div>
        <span className="flex w-5 items-center justify-center border border-[#222] bg-[#4d4d4d]"><Tri dir="left" className="h-[14px] w-[9px]" /></span>
        <span className="w-[546px] border-r border-[#222] bg-linear-to-b from-[#666] to-[#393939]" />
        <span className="flex-1 bg-[#141414]" />
        <span className="flex w-5 items-center justify-center bg-[#4d4d4d]"><Tri dir="right" className="h-[14px] w-[9px]" /></span>
      </div>
      {/* playhead */}
      <svg viewBox="0 0 62 52" className="absolute top-0 left-0 h-[52px] w-[62px]">
        <path d="M0 2h52" stroke="#24a6ba" strokeWidth="2" /><path d="M50 1h11v8z" fill="#2cc8e0" />
        <path d="M29.500 14v38" stroke="#d81e1e" /><path d="M25 0h9v12l-4.500 7L25 12z" fill="#c81e1e" /><path d="M0 18h4v8H0z" fill="#000" />
      </svg>
    </div>
  )
}

function Timeline() {
  return (
    <section className={`flex h-[285px] shrink-0 flex-col ${PANEL}`}>
      <div className="flex h-[35px] shrink-0 justify-between pr-[5px] pl-[6px]">
        <div className="pt-[7px]"><Burger /></div>
        <ViewTabs tabs={[['Timeline', 'w-[80px]'], ['Node Library', 'w-[108px]']]} />
      </div>
      <PlaybackBar />
      <div className="flex min-h-0 flex-1 pr-[2px] pb-[2px]">
        <LayerList />
        <div className="w-[14px] border-x border-[#222] bg-[#585858]" />
        <Frames />
      </div>
    </section>
  )
}

/* ---------- floating windows ---------- */

function BrushRow({ label, value, text, disabled, className }: { label?: string; value: number; text: string; disabled?: boolean; className: string }) {
  return (
    <div className={`flex h-[30px] items-center pr-[3px] ${className}`}>
      {label && <span className="w-[121px] shrink-0">{label}</span>}
      <Slider label={label ?? text} value={value} disabled={disabled} className={`flex-1 ${disabled ? 'ml-[3px]' : ''}`} />
      <input
        aria-label={`${label ?? 'Tip'} value`}
        defaultValue={text}
        disabled={disabled}
        className={`ml-[4px] h-[32px] w-[68px] border border-[#505050] pl-[8px] ${disabled ? 'bg-[#262626] text-[#6a6a6a]' : 'bg-[#181818] text-[#d6d6d6]'}`}
      />
      <span className="ml-[6px]"><Spin dim={disabled} /></span>
    </div>
  )
}

function BrushWindow() {
  return (
    <div role="dialog" aria-label="Vector Brush Properties" className="absolute top-[123px] left-[778px] w-[531px] rounded-b-lg rounded-t-md bg-[#454545] text-sm text-[#bdbdbd] shadow-[0_10px_24px_rgba(0,0,0,0.55)]">
      <div className="flex h-[20px] items-center rounded-t-md bg-[#f5f5f5] px-[7px] font-[Inter,sans-serif] text-sm leading-5 text-[#a9a9a9]">
        <span className="flex w-[80px] gap-[8px]">{[0, 1, 2].map(i => <i key={i} className="size-[14px] rounded-full border border-[#c8c8c8] bg-[#dcdcdc]" />)}</span>
        <span className="flex-1 pr-[83px] text-center">Vector Brush Properties</span>
      </div>
      <div className="px-[13px] pb-[15px]">
        <div className="flex h-[41px] items-center">
          <span className="flex-1 pl-[53px] text-center">Brush 4 *</span>
          <span className="mr-[9px] flex gap-[15px]"><Icon name="pencilAdd" className="size-4" /><Icon name="pencilNew" className="size-4" /></span>
        </div>
        <Stroke d={LONG_WAVE} className="h-[69px] w-[504px]" />
        <div className="flex h-[32px] items-end pl-[7px]" role="tablist">
          <button role="tab" aria-selected="true" className="h-[32px] w-[44px] bg-linear-to-b from-[#575757] to-[#393939] pt-[2px] text-[#e6e6e6]">Tip</button>
          <button role="tab" className="h-[28px] w-[93px] border-t border-r border-[#5e5e5e] bg-[#4e4e4e]">Smoothing</button>
          <button role="tab" className="h-[28px] w-[110px] border-t border-r border-[#5e5e5e] bg-[#4e4e4e]">Transparency</button>
          {[['Dual Tip', 'w-[107px]'], ['Paper Texture', 'flex-1']].map(([t, w]) => (
            <label key={t} className={`flex h-[28px] items-center justify-between border-t border-r border-[#5e5e5e] bg-[#4e4e4e] pr-[10px] pl-[8px] ${w}`}>
              <input type="checkbox" className="mb-[4px] size-[15px] appearance-none rounded-[3px] bg-[#a8a8a8]" />
              {t}
            </label>
          ))}
        </div>
        <div className="border border-[#5e5e5e] pt-[15px] pr-[15px] pb-[19px] pl-[14px]">
          <label className="flex h-[28px] items-center">
            <span className="w-[121px]">Brush Type</span>
            <span className="flex h-[29px] flex-1 border border-[#555]">
              <select className="min-w-0 flex-1 appearance-none bg-[#181818] pl-[3px] text-[#d0d0d0]"><option>Solid Vector</option></select>
              <span className="flex w-[21px] items-center justify-center border-l border-[#707070] bg-[#181818]"><Tri dir="down" className="h-[5px] w-[8px]" /></span>
            </span>
          </label>
          <div className="mt-[20px] flex">
            <div className="flex h-[221px] w-[428px] items-start border border-[#555] bg-[#181818] text-xs leading-[18px] text-black">
              {[['Circle', <circle cx="31" cy="31" r="31" />], ['Diamond', <path d="M31 0l31 31-31 31L0 31z" />], ['Square', <path d="M0 0h62v62H0z" />]].map(([n, s], i) => (
                <button key={i} className={`flex h-[90px] w-[75px] flex-col items-center border-2 bg-[#e2e2e2] ${i === 1 ? 'border-[#3434d8] font-bold' : 'border-[#e2e2e2]'}`}>
                  {n}
                  <svg viewBox="0 0 62 62" className="mt-[2px] size-[62px]">{s}</svg>
                </button>
              ))}
            </div>
            <div className="flex flex-1 flex-col items-center pt-[8px] pl-[12px]">
              <Icon name="page" className="size-4" />
              <Tri dir="down" className="-mt-px ml-[22px] h-[8px] w-[9px]" fill="#222" />
              <svg viewBox="0 0 12 60" className="mt-[23px] h-[60px] w-3"><path d="M0 6h12M6 0v12M0 51h12" stroke="#333" strokeWidth="1.500" /></svg>
            </div>
          </div>
          <BrushRow label="Maximum Size" value={15} text="61.6" className="mt-[26px]" />
          <BrushRow label="Minimum Size" value={0} text="0 %" className="mt-[15px]" />
          <div className="mt-[16px] flex">
            <svg viewBox="0 0 121 100" className="h-[100px] w-[121px]">
              <path d="M0 29h69v69H0z" fill="#e6e6e6" /><path d="M35 45l21 18-21 18-21-18z" />
              <path d="M9 19h44M79 39v48" stroke="#c8c8c8" strokeWidth="3" /><path d="M5 19l8-5v10zM62 19l-8-5v10zM79 34l-5 9h10zM79 91l-5-9h10z" fill="#c8c8c8" />
            </svg>
            <div className="flex-1">
              <p className="h-[26px] leading-[20px] text-[#999]">Roundness &amp; Angle</p>
              <BrushRow value={85.4} text="85.4 %" className="" />
              <BrushRow value={0} text="0 °" className="mt-[15px]" />
            </div>
          </div>
          <hr className="mt-[16px] border-t-2 border-[#d0d0d0]" />
          <BrushRow label="Hardness" value={100} text="100" disabled className="mt-[18px]" />
          <BrushRow label="Spacing" value={5} text="7 %" disabled className="mt-[15px]" />
          <BrushRow label="Random Size" value={0} text="0 %" disabled className="mt-[30px]" />
          <BrushRow label="Random Angle" value={0} text="0 °" disabled className="mt-[15px]" />
          <BrushRow label="Random Spacing" value={0} text="0 %" disabled className="mt-[15px]" />
        </div>
      </div>
    </div>
  )
}

function NewPreset() {
  const btn = 'h-[40px] w-[94px] border border-t-[#5a5a5a] border-r-[#222] border-b-[#222] border-l-[#5a5a5a] bg-[#4c4c4c] text-[#d8d8d8]'
  return (
    <form className="absolute top-[491px] left-[905px] w-[250px] rounded-lg bg-[#454545] text-base text-[#bdbdbd] shadow-[0_12px_40px_6px_rgba(0,0,0,0.6)]">
      <div className="flex h-[27px] items-center rounded-t-lg bg-linear-to-b from-[#ececec] to-[#d2d2d2] pl-[10px] font-[Inter,sans-serif] text-[#444]">
        <span className="mr-[11px] flex gap-[10px]">
          {['bg-[#8a8a8a]', 'bg-[#d2d2d2]', 'bg-[#8a8a8a]'].map((c, i) => <i key={i} className={`size-[15px] rounded-full border border-black/15 ${c}`} />)}
        </span>
        <svg viewBox="0 0 16 16" className="mr-[6px] size-4"><path d="M8 0l8 8-8 8-3-4-3 1 1-3-3-2 3-2-1-3 3 1z" fill="#27b8e4" /></svg>
        New Preset
      </div>
      <div className="px-[11px] pt-[11px] pb-[13px]">
        <label htmlFor="preset-name" className="block h-[27px] pl-[2px] leading-[24px]">Name</label>
        <div className="relative">
          <input id="preset-name" defaultValue="Brush 7" className="block h-[37px] w-full border-2 border-[#559aa5] bg-[#181818] pl-[8px] text-[#d8d8d8] outline-none" />
          <span className="absolute top-[10px] left-[70px] h-[19px] w-px bg-[#d8d8d8]" />
        </div>
        <div className="mt-[17px] flex gap-[18px] pl-[21px]">
          <button type="button" className={btn}>Cancel</button>
          <button type="button" className={btn}>OK</button>
        </div>
      </div>
    </form>
  )
}

function Pointer() {
  return (
    <svg viewBox="0 0 92 92" className="pointer-events-none absolute top-[588px] left-[999px] size-[92px]">
      <circle cx="46" cy="46" r="43" fill="none" stroke="#f4f41e" strokeWidth="4" />
      <path d="M44 42v19l4-4 4 7 3-2-3-6h6z" fill="#000" stroke="#fff" />
    </svg>
  )
}

function VHandle() {
  return (
    <svg viewBox="0 0 16 66" className="h-[66px] w-full"><path d="M1 2h14M1 30h14M1 34h14M1 64h14" stroke="#ccc" strokeWidth="1.500" /><path d="M12 9l-8 8 8 8M4 40l8 8-8 8" fill="none" stroke="#ccc" strokeWidth="3" /></svg>
  )
}

export default function App() {
  return (
    <div className="flex min-h-screen flex-col bg-black pt-[67px] pr-[115px] pb-[66px] pl-[120px] font-['Noto_Sans',sans-serif]">
      <main className="relative flex flex-1 flex-col">
        <MainToolbar />
        <div className="flex flex-1 bg-[#454545]">
          <SideTools />
          <div className="flex min-w-0 flex-1 flex-col bg-[#545454] pr-[2px] pl-[2px]">
            <div className="flex flex-1">
              <CameraPanel />
              <div className="flex w-4 shrink-0 flex-col justify-center"><VHandle /></div>
              <div className="flex w-[819px] shrink-0 flex-col">
                <ToolProperties />
                <div className="flex h-4 items-center justify-center">
                  <svg viewBox="0 0 64 14" className="h-[14px] w-16"><path d="M1 1v12M30 1v12M34 1v12M63 1v12" stroke="#ccc" strokeWidth="1.500" /><path d="M8 10l7-7 7 7M41 4l7 7 7-7" fill="none" stroke="#ccc" strokeWidth="3" /></svg>
                </div>
                <ColourPanel />
              </div>
            </div>
            <div className="h-4 shrink-0" />
            <Timeline />
          </div>
        </div>
        <BrushWindow />
        <NewPreset />
        <Pointer />
      </main>
    </div>
  )
}
